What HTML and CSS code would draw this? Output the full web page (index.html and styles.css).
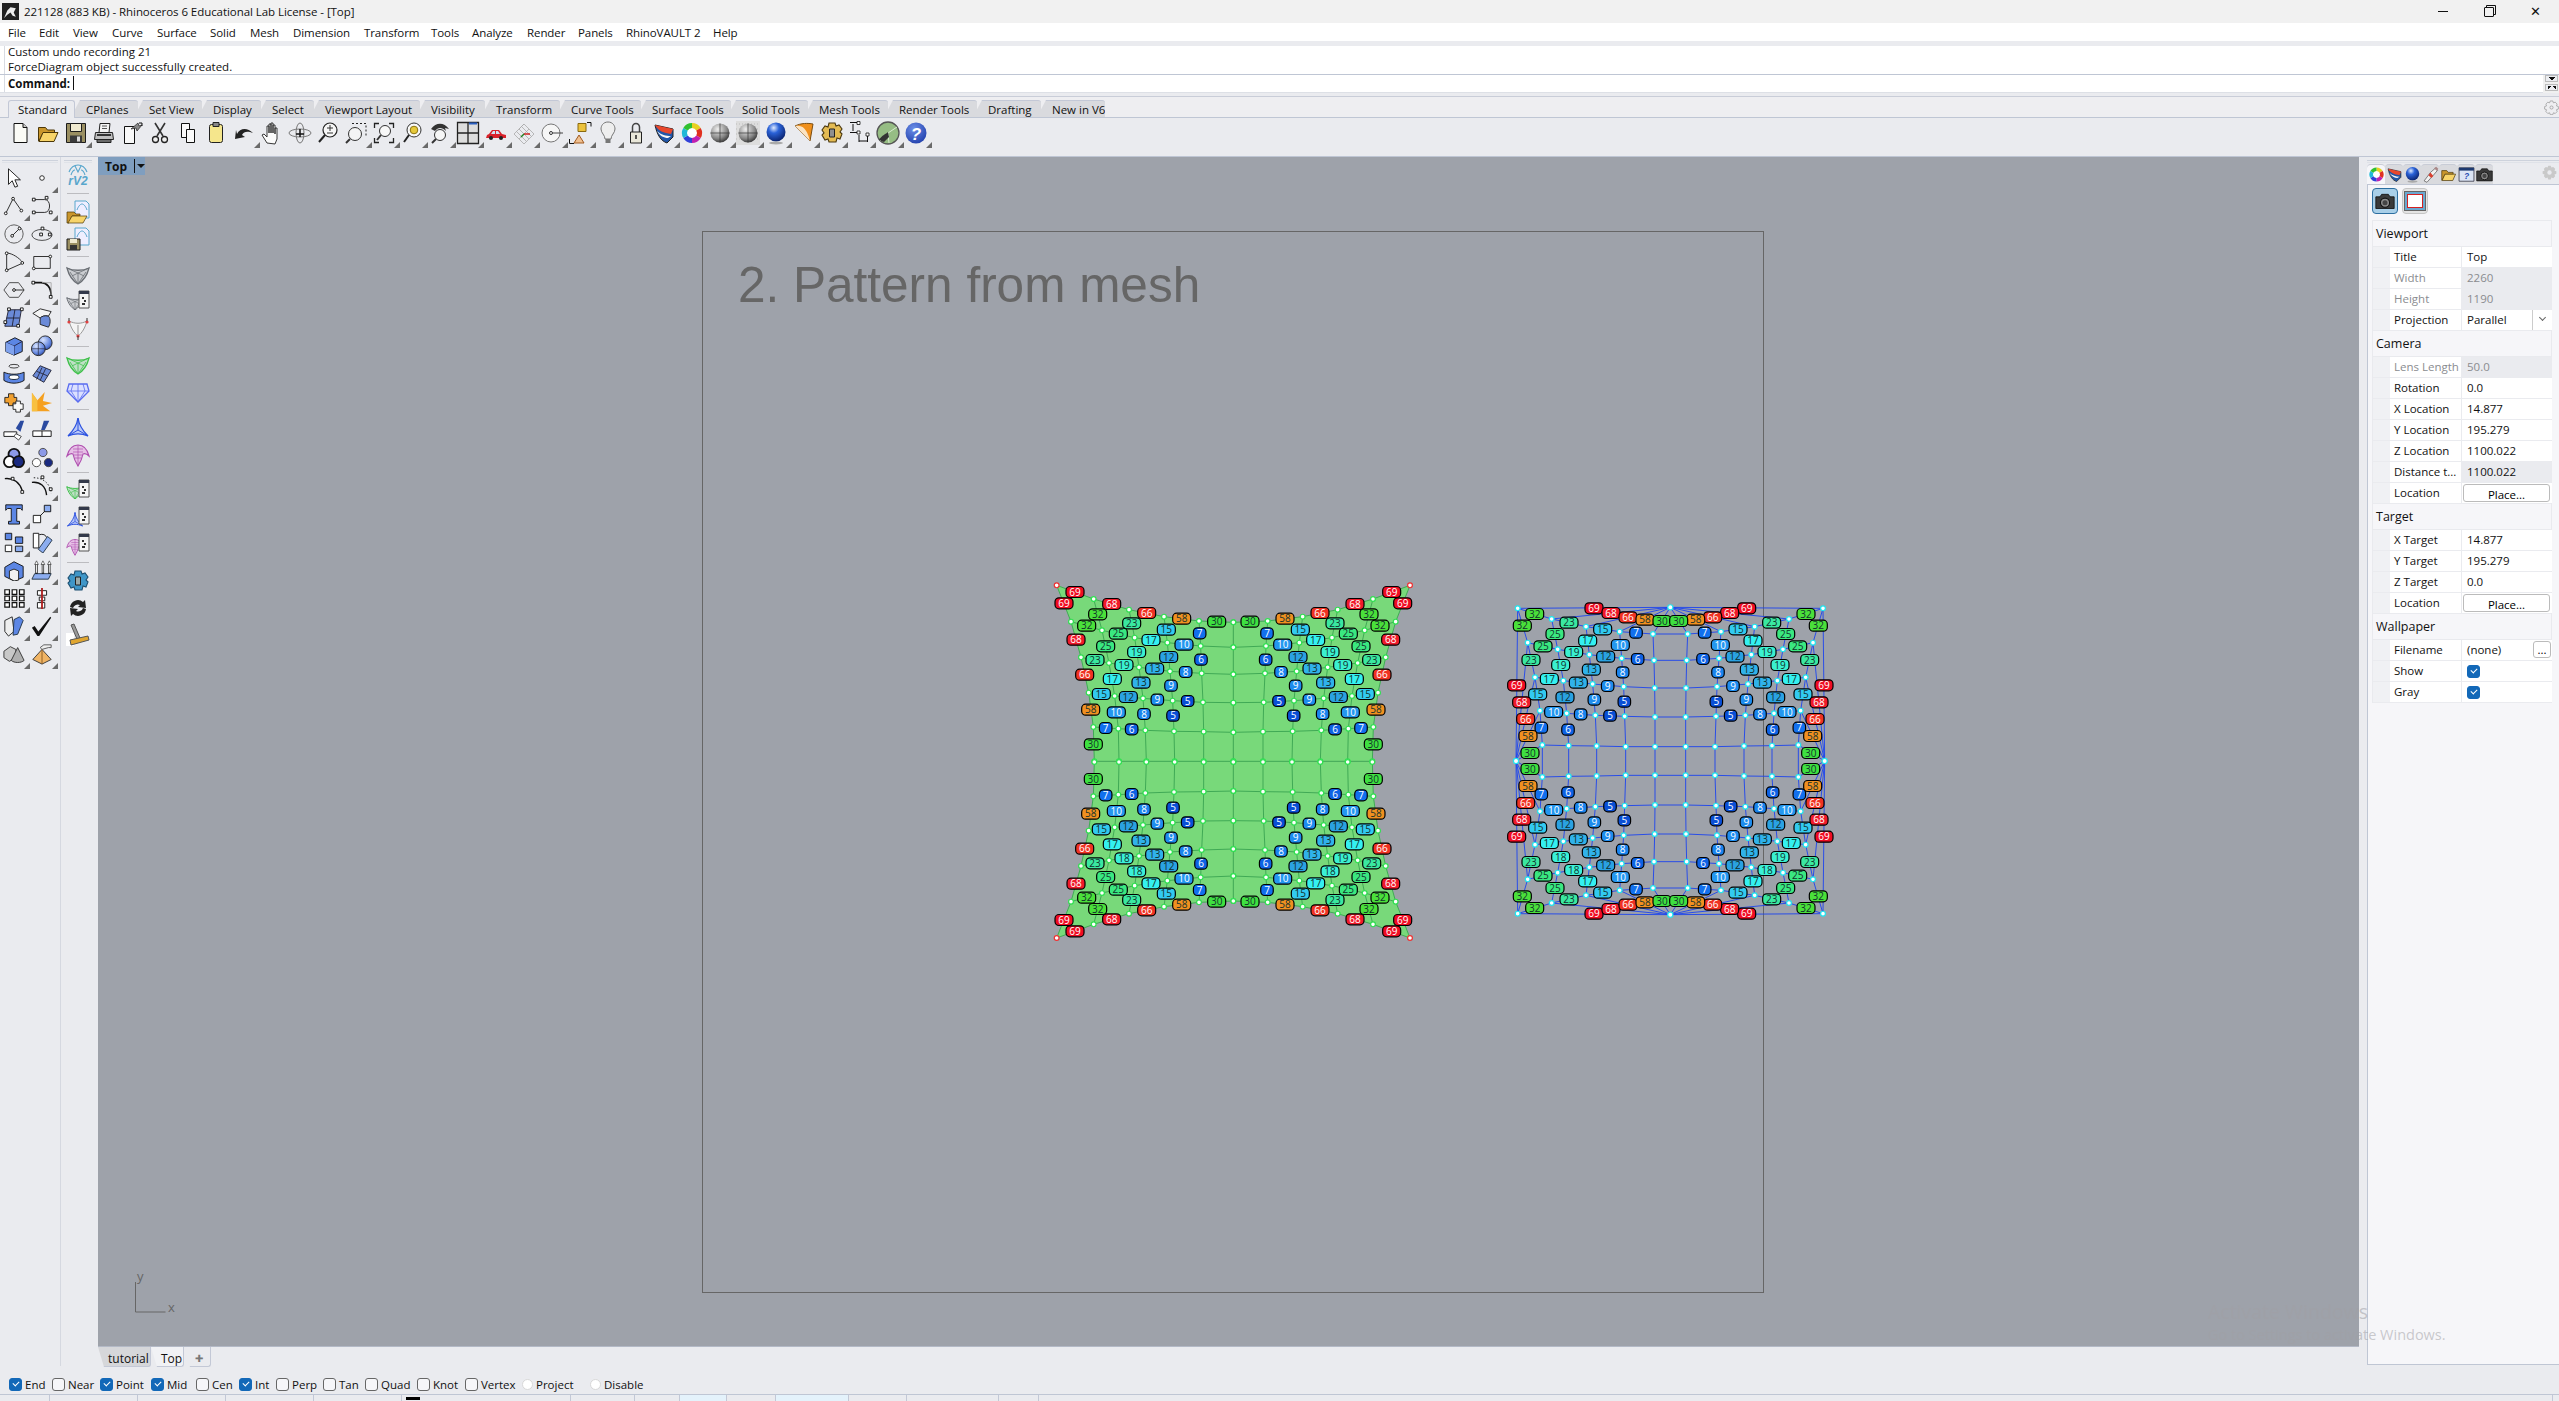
FILE: index.html
```html
<!DOCTYPE html>
<html lang="en">
<head>
    <meta charset="UTF-8">
    <title>221128 (883 KB) - Rhinoceros 6 Educational Lab License - [Top]</title>
    <link rel="stylesheet" href="styles.css">
</head>
<body>

    <!-- shared icon set -->
    <svg class="icon-defs" width="0" height="0">
        <defs>
            <symbol id="i-logo" viewBox="0 0 16 16"><path d="M0 0h16v16H0z" fill="#222"/><path d="M2 14l3-7 3-3 5 1-2 4 2 4-3-1-2-3-3 2z" fill="#eee"/></symbol>
            <symbol id="i-new" viewBox="0 0 24 24"><path d="M6 2.5h9l4 4v15H6z" fill="#fbfbf6" stroke="#111"/><path d="M15 2.5v4h4" fill="#ccc" stroke="#111"/></symbol>
            <symbol id="i-open" viewBox="0 0 24 24"><path d="M2.500 20V6.500h7l2 2.500h7v3H7l-4 8z" fill="#c9962c" stroke="#4c3708"/><path d="M3 20.500l4-9h15l-4 9z" fill="#f7d469" stroke="#4c3708"/></symbol>
            <symbol id="i-save" viewBox="0 0 24 24"><path d="M2.500 2.500h19v19h-19z" fill="#9a8f62" stroke="#1c1c1c"/><path d="M6.500 2.500h11v8h-11z" fill="#efe9cf" stroke="#1c1c1c"/><path d="M6 14.500h12v7H6z" fill="#3b3b3b"/><path d="M13 15.500h3v5h-3z" fill="#ddd"/></symbol>
            <symbol id="i-print" viewBox="0 0 24 24"><path d="M8 2.500h10l-1 9H7z" fill="#f4f4f4" stroke="#222"/><path d="M10 5h5M10 7.500h5" stroke="#555"/><path d="M3.500 11.500h17l1 7h-19z" fill="#bfbfbf" stroke="#222"/><path d="M5 18.500h14v3H5z" fill="#6a6a6a" stroke="#222"/><path d="M5 14h14" stroke="#333" stroke-width="2"/></symbol>
            <symbol id="i-props" viewBox="0 0 24 24"><path d="M4.500 5.500h10v17h-10z" fill="#f8f8f8" stroke="#111"/><path d="M11 8l7-6 1 3 3-1-5 6-1-3z" fill="#888" stroke="#222" stroke-width=".7"/><path d="M19 2h3v3" fill="none" stroke="#111"/></symbol>
            <symbol id="i-cut" viewBox="0 0 24 24"><path d="M7 2l8 13M17 2L9 15" stroke="#333" stroke-width="1.600" fill="none"/><circle cx="7.500" cy="18.500" r="3" fill="#eee" stroke="#222" stroke-width="1.300"/><circle cx="16.500" cy="18.500" r="3" fill="#eee" stroke="#222" stroke-width="1.300"/></symbol>
            <symbol id="i-copy" viewBox="0 0 24 24"><path d="M5.500 2.500h8v14h-8z" fill="#fafafa" stroke="#111"/><path d="M10.500 8.500h8v13h-8z" fill="#fafafa" stroke="#111"/></symbol>
            <symbol id="i-paste" viewBox="0 0 24 24"><rect x="5.500" y="3.500" width="13" height="18" rx="2" fill="#f5e68c" stroke="#222"/><path d="M9 1.500h6v4H9z" fill="#888" stroke="#222"/></symbol>
            <symbol id="i-undo" viewBox="0 0 24 24"><path d="M5 13c3-6 10-7 16-1-5-2-9-2-11 2l3 2-10 2 1-9z" fill="#222"/></symbol>
            <symbol id="i-hand" viewBox="0 0 24 24"><path d="M7 22l-5-8 2-1 3 3V5h2v7-9h2v9-10h2v10-8h2v9-6h2v11l-2 5z" fill="#fbfbfb" stroke="#222" stroke-width=".9"/></symbol>
            <symbol id="i-orbit" viewBox="0 0 24 24"><ellipse cx="12" cy="12" rx="11" ry="4" fill="none" stroke="#777"/><ellipse cx="12" cy="12" rx="4" ry="10" fill="none" stroke="#777"/><path d="M8 13h8M12 8v8" stroke="#111" stroke-width="1.500"/></symbol>
            <symbol id="i-zoom" viewBox="0 0 24 24"><circle cx="14" cy="9" r="7" fill="#f7f7f7" stroke="#222" stroke-width="1.200"/><path d="M9 14l-6 7" stroke="#222" stroke-width="2"/><path d="M11 7h6M14 4v6M11 12h6" stroke="#333"/></symbol>
            <symbol id="i-zwin" viewBox="0 0 24 24"><path d="M8 2.500h14v14" fill="none" stroke="#222" stroke-dasharray="2 2"/><circle cx="11" cy="13" r="6.500" fill="#f4f4f4" stroke="#333"/><path d="M6 18l-4 4" stroke="#333" stroke-width="2"/></symbol>
            <symbol id="i-zext" viewBox="0 0 24 24"><path d="M2.500 7V2.500H7M17 2.500h4.500V7M21.500 17v4.500H17M7 21.500H2.500V17" fill="none" stroke="#222" stroke-width="1.300"/><circle cx="13" cy="10" r="5.500" fill="#f8f8f8" stroke="#333"/><path d="M9 14l-4 5" stroke="#333" stroke-width="2"/></symbol>
            <symbol id="i-zsel" viewBox="0 0 24 24"><circle cx="14" cy="9" r="7" fill="#f8f8f8" stroke="#333"/><circle cx="14" cy="9" r="3.800" fill="#e6c93a" stroke="#8a7210"/><path d="M9 14l-5 7" stroke="#222" stroke-width="2"/></symbol>
            <symbol id="i-zprev" viewBox="0 0 24 24"><circle cx="12" cy="14" r="5.500" fill="#f6f6f6" stroke="#333"/><path d="M8 18l-4 4" stroke="#333" stroke-width="2"/><path d="M3 8c5-7 13-7 18 0l-4-1 1 3c-4-4-8-4-11 0z" fill="#333"/></symbol>
            <symbol id="i-views" viewBox="0 0 24 24"><path d="M1.500 1.500h21v21h-21z" fill="#ddd" stroke="#222" stroke-width="1.300"/><path d="M12 1.500v21M1.500 12h21" stroke="#222" stroke-width="1.300"/><path d="M13 1.500h8v2h-8z" fill="#2a5fc0"/></symbol>
            <symbol id="i-car" viewBox="0 0 24 24"><path d="M3 14l2-1 3-4h7l3 4 4 1v3H2z" fill="#d8222a"/><path d="M9 10h2v3H7zM12 10h2l2 3h-4z" fill="#cfe3f4"/><circle cx="7" cy="17" r="2" fill="#222"/><circle cx="17" cy="17" r="2" fill="#222"/></symbol>
            <symbol id="i-cgrid" viewBox="0 0 24 24"><path d="M2 13l10-10 10 10-10 10zM7 8l10 10M12 3l-5 5M7 18L17 8M4.500 10.500l10 10M9.500 5.500l10 10" fill="none" stroke="#aaa" stroke-width=".8"/><path d="M12 13h6" stroke="#d02020" stroke-width="1.500"/><path d="M12 13l-3 3" stroke="#208020" stroke-width="1.500"/></symbol>
            <symbol id="i-target" viewBox="0 0 24 24"><circle cx="11" cy="12" r="9" fill="#f6f6f6" stroke="#777"/><circle cx="11" cy="12" r="1.500" fill="none" stroke="#333"/><path d="M13 12h10" stroke="#444"/></symbol>
            <symbol id="i-select" viewBox="0 0 24 24"><path d="M10 2.500h8v8h-8z" fill="#ecc23c" stroke="#8a6a10"/><path d="M11 14l5 8H6z" fill="#f0c090" stroke="#a05a20"/><path d="M19 1.500h4v4M1.500 18v4.500H6" fill="none" stroke="#111"/></symbol>
            <symbol id="i-bulb" viewBox="0 0 24 24"><path d="M12 1c-5 0-7 4-7 7 0 4 4 6 4 10h6c0-4 4-6 4-10 0-3-2-7-7-7z" fill="#eee" stroke="#777"/><path d="M9.500 18h5v4h-5z" fill="#777"/></symbol>
            <symbol id="i-lock" viewBox="0 0 24 24"><path d="M8.500 11V6a3.500 3.500 0 017 0v5" fill="none" stroke="#444" stroke-width="1.500"/><path d="M6.500 11h11v11h-11z" fill="#e9e7d9" stroke="#222"/><path d="M12 14v4" stroke="#222" stroke-width="1.500"/></symbol>
            <symbol id="i-shield" viewBox="0 0 24 24"><path d="M3 4l18 4v8l-6 6C9 20 5 14 3 4z" fill="#2056a8" stroke="#222"/><path d="M3 4l18 4-2 5C12 12 6 10 3 4z" fill="#e8472c"/><path d="M5 10c4 4 9 5 14 5l-3 2C12 17 8 15 5 10z" fill="#f4f4f4"/></symbol>
            <symbol id="i-wheel" viewBox="0 0 24 24"><circle cx="12" cy="12" r="8" fill="#fff" stroke="none"/><path d="M12 2a10 10 0 018.700 5l-4.400 2.500A5 5 0 0012 7z" fill="#e8d020"/><path d="M20.700 7a10 10 0 010 10l-4.400-2.500a5 5 0 000-5z" fill="#e03020"/><path d="M20.700 17A10 10 0 0112 22v-5a5 5 0 004.300-2.500z" fill="#c020b0"/><path d="M12 22a10 10 0 01-8.700-5l4.400-2.500A5 5 0 0012 17z" fill="#3040d8"/><path d="M3.300 17a10 10 0 010-10l4.400 2.500a5 5 0 000 5z" fill="#20b8d8"/><path d="M3.300 7A10 10 0 0112 2v5a5 5 0 00-4.300 2.500z" fill="#30c030"/></symbol>
            <symbol id="i-ball" viewBox="0 0 24 24"><defs><radialGradient id="g-ball" cx=".38" cy=".3" r=".8"><stop offset="0" stop-color="#eee"/><stop offset=".6" stop-color="#888"/><stop offset="1" stop-color="#222"/></radialGradient></defs><circle cx="12" cy="12" r="9.500" fill="url(#g-ball)"/><path d="M2.500 12h19M12 2.500v19" stroke="#333" stroke-width=".7"/></symbol>
            <symbol id="i-ball-dot" viewBox="0 0 24 24"><path d="M0 0h24v24H0z" fill="#ddd"/><path d="M0 3h24M0 8h24M0 13h24M0 18h24" stroke="#bbb" stroke-dasharray="1 2"/><use href="#i-ball" width="24" height="24"/></symbol>
            <symbol id="i-blueball" viewBox="0 0 24 24"><defs><radialGradient id="g-blue" cx=".38" cy=".28" r=".8"><stop offset="0" stop-color="#dfeaff"/><stop offset=".35" stop-color="#2a62d8"/><stop offset="1" stop-color="#061a60"/></radialGradient></defs><circle cx="12" cy="11" r="9.500" fill="url(#g-blue)"/><ellipse cx="12" cy="22" rx="7" ry="1.500" fill="#aaa"/></symbol>
            <symbol id="i-cone" viewBox="0 0 24 24"><path d="M3 5c6-3 13-3 18-2l-3 17z" fill="#f0901c" stroke="#7a4c10"/><path d="M3 5c6-1 11 0 15 15z" fill="#fbe3c2"/></symbol>
            <symbol id="i-gear" viewBox="0 0 24 24"><path d="M9 2h6l1 3 3-1 3 4-2 3 2 2-2 5-3-1-1 4H9l-1-3-3 1-3-5 2-2-2-3 3-4 3 1z" fill="#e4bb52" stroke="#4a3810" stroke-width="1.100"/><path d="M9.500 8h5v8h-5z" fill="#8f8f8f" stroke="#222"/></symbol>
            <symbol id="i-dims" viewBox="0 0 24 24"><path d="M2 1.500h7M5 3v7M2 11.500h8" stroke="#111" fill="none"/><path d="M9 .5h3v3H9zM9 10h3v3H9zM18 12h3v3h-3z" fill="#fff" stroke="#111" stroke-width=".8"/><path d="M11 14v7M19.500 15v6M11 20h8" stroke="#111"/></symbol>
            <symbol id="i-globe" viewBox="0 0 24 24"><circle cx="12" cy="12" r="11" fill="#96bd84" stroke="#555" stroke-width="1.300"/><path d="M12 12l9-6M12 12l1 10M12 12L4 20" stroke="#d9ecd0"/><path d="M3 19c3-5 7-6 9-8l1 5-5 5z" fill="#333"/></symbol>
            <symbol id="i-help" viewBox="0 0 24 24"><defs><radialGradient id="g-help" cx=".4" cy=".3" r=".8"><stop offset="0" stop-color="#6c8fe8"/><stop offset="1" stop-color="#1c3aa8"/></radialGradient></defs><circle cx="12" cy="12" r="10.500" fill="url(#g-help)"/><text x="12" y="18.500" text-anchor="middle" font-family="Liberation Sans" font-weight="700" font-size="17" fill="#fff">?</text></symbol>

            <symbol id="i-arrow" viewBox="0 0 24 24"><path d="M6 2v17l4-4 3 7 3-1-3-7h6z" fill="#fff" stroke="#111"/></symbol>
            <symbol id="i-point" viewBox="0 0 24 24"><circle cx="12" cy="12" r="2.500" fill="#fff" stroke="#222"/></symbol>
            <symbol id="i-poly" viewBox="0 0 24 24"><path d="M3 20L11 4l9 13" fill="none" stroke="#222"/><g fill="#fff" stroke="#111"><circle cx="3" cy="20" r="1.500"/><circle cx="11" cy="4" r="1.500"/><circle cx="20" cy="17" r="1.500"/></g></symbol>
            <symbol id="i-curve" viewBox="0 0 24 24"><path d="M3 5h12c7 0 7 14 0 14H3" fill="none" stroke="#222"/><g fill="#fff" stroke="#111"><path d="M1.500 3.500h3v3h-3zM15.500 1.500h3v3h-3zM20 17.500h3v3h-3zM1.500 17.500h3v3h-3z"/></g></symbol>
            <symbol id="i-circle" viewBox="0 0 24 24"><circle cx="12" cy="12" r="10" fill="none" stroke="#555"/><path d="M10 14l8-8" stroke="#222"/><circle cx="10" cy="14" r="1.500" fill="#fff" stroke="#111"/><circle cx="18" cy="6" r="1.500" fill="#fff" stroke="#111"/></symbol>
            <symbol id="i-ellipse" viewBox="0 0 24 24"><ellipse cx="12" cy="13" rx="11" ry="6" fill="none" stroke="#444"/><path d="M9.500 11h3v3h-3zM11 4.500h3v3h-3zM19 11h3v3h-3z" fill="#fff" stroke="#111"/></symbol>
            <symbol id="i-arc" viewBox="0 0 24 24"><path d="M4 2v19l18-8C17 7 11 3 4 2z" fill="none" stroke="#222"/><g fill="#fff" stroke="#111"><circle cx="4" cy="2.500" r="1.500"/><circle cx="4" cy="21" r="1.500"/><circle cx="21" cy="13" r="1.500"/></g></symbol>
            <symbol id="i-rect" viewBox="0 0 24 24"><path d="M3 6h18v13H3z" fill="none" stroke="#222"/><circle cx="3" cy="19" r="1.500" fill="#fff" stroke="#111"/><circle cx="21" cy="6" r="1.500" fill="#fff" stroke="#111"/></symbol>
            <symbol id="i-hex" viewBox="0 0 24 24"><path d="M7 4h10l6 8-6 8H7l-6-8z" fill="none" stroke="#444"/><path d="M12 12h11" stroke="#222"/><circle cx="12" cy="12" r="1.500" fill="#fff" stroke="#111"/></symbol>
            <symbol id="i-fillet" viewBox="0 0 24 24"><path d="M3 4h8c6 0 11 5 11 14" fill="none" stroke="#111" stroke-width="2"/><path d="M12 4h10v14" fill="none" stroke="#aaa"/><path d="M1 2.500h3v3H1zM20 18h3v3h-3z" fill="#fff" stroke="#111"/></symbol>
            <symbol id="i-patch" viewBox="0 0 24 24"><path d="M6 3h14l-3 18H2z" fill="#6a8ad8" stroke="#223"/><path d="M13 3l-3 18M4 12h14" stroke="#223"/><g fill="#fff" stroke="#111"><path d="M5 1h3v3H5zM19 1h3v3h-3zM15 19h3v3h-3zM1 15h3v3H1z"/></g></symbol>
            <symbol id="i-bent" viewBox="0 0 24 24"><path d="M2 7l8-5 12 3-3 5c-4-1-7 0-9 2z" fill="#f4f4f4" stroke="#222"/><path d="M19 10c3 3 2 9 0 12l-9-3V12c2-2 5-3 9-2z" fill="#6a8ad8" stroke="#222"/></symbol>
            <symbol id="i-cube" viewBox="0 0 24 24"><path d="M3 8l10-5 8 4v11l-9 4-9-4z" fill="#5c86e4" stroke="#111"/><path d="M3 8l9 4 9-5M12 12v10" fill="none" stroke="#224"/><path d="M3 8l9 4v10l-9-4z" fill="#7fa2ee"/></symbol>
            <symbol id="i-spheres" viewBox="0 0 24 24"><defs><radialGradient id="g-sph" cx=".35" cy=".3" r=".8"><stop offset="0" stop-color="#d8e4ff"/><stop offset=".7" stop-color="#5c80dc"/><stop offset="1" stop-color="#2a3e90"/></radialGradient></defs><circle cx="15.500" cy="8.500" r="7.500" fill="url(#g-sph)" stroke="#222"/><circle cx="8" cy="15" r="7.500" fill="url(#g-sph)" stroke="#222"/><path d="M.5 15h15M8 8v14" stroke="#223" stroke-width=".7"/></symbol>
            <symbol id="i-tube" viewBox="0 0 24 24"><ellipse cx="12" cy="3.500" rx="5.500" ry="2" fill="none" stroke="#333"/><path d="M1 10c6 3 16 3 22 0v9c-6 4-16 4-22 0z" fill="#5c86e4" stroke="#111"/><ellipse cx="12" cy="15.500" rx="5.500" ry="2.500" fill="#fff" stroke="#123"/></symbol>
            <symbol id="i-meshbent" viewBox="0 0 24 24"><path d="M2 14l8-11 12 5-8 13z" fill="#6a8ad8" stroke="#223"/><path d="M6 9l12 5M12 5l-6 13M16 6l-6 13" stroke="#223" stroke-width=".9"/></symbol>
            <symbol id="i-union" viewBox="0 0 24 24"><path d="M2 7h4V3h6v4h3v6h-4v3H6v-3H2z" fill="#f0a030" stroke="#222"/><path d="M11 14h3v-3h5v3h3v6h-3v3h-5v-3h-3z" fill="#fafafa" stroke="#222"/></symbol>
            <symbol id="i-burst" viewBox="0 0 24 24"><path d="M1 2l6 8 8-9-2 10 10 2-10 3 8 6H1z" fill="#f5a020"/><path d="M1 2l6 8v12H1z" fill="#f8c040"/></symbol>
            <symbol id="i-trim" viewBox="0 0 24 24"><path d="M1 14h14v5H1z" fill="#fff" stroke="#111"/><path d="M14 10l5-8h4l-4 12z" fill="#2a4aa0"/><path d="M14 16l6 3-3 4-5-4z" fill="#fff" stroke="#444"/></symbol>
            <symbol id="i-split" viewBox="0 0 24 24"><path d="M2 13h20v6H2z" fill="#fff" stroke="#111"/><path d="M11 12l3-10h6l-5 10z" fill="#2a4aa0"/><path d="M12 13v6" stroke="#111"/></symbol>
            <symbol id="i-circles" viewBox="0 0 24 24"><circle cx="12" cy="8" r="6" fill="#8c9ae8" stroke="#111" stroke-width="2"/><circle cx="7" cy="16" r="6" fill="#fff" stroke="#111" stroke-width="2"/><circle cx="17" cy="16" r="6" fill="#1a2a80" stroke="#111" stroke-width="2"/></symbol>
            <symbol id="i-circles2" viewBox="0 0 24 24"><circle cx="13" cy="6" r="4.500" fill="#8c9ae8" stroke="#444"/><circle cx="6" cy="17" r="4.500" fill="#fff" stroke="#444"/><circle cx="19" cy="17" r="4.500" fill="#1a2a80" stroke="#444"/></symbol>
            <symbol id="i-cpts" viewBox="0 0 24 24"><path d="M2 4c9-1 16 4 19 13" fill="none" stroke="#111" stroke-width="1.500"/><path d="M9 2.500h3v3H9zM19.500 17h3v3h-3z" fill="#fff" stroke="#111"/></symbol>
            <symbol id="i-offset" viewBox="0 0 24 24"><path d="M1 8c9-1 15 4 16 14" fill="none" stroke="#111" stroke-width="1.500"/><path d="M3 3c11 0 18 7 19 17" fill="none" stroke="#111" stroke-dasharray="1.500 2"/><path d="M11 1h3v3h-3zM20 14h3v3h-3z" fill="#fff" stroke="#111"/></symbol>
            <symbol id="i-text" viewBox="0 0 24 24"><path d="M3 2h18v6l-2-2h-4v14h3v3H6v-3h3V6H5L3 8z" fill="#5c86e4" stroke="#111"/></symbol>
            <symbol id="i-scale" viewBox="0 0 24 24"><path d="M2.500 13.500h8v8h-8z" fill="#fff" stroke="#111"/><path d="M14.500 2.500h7v7h-7z" fill="#8cadf0" stroke="#111"/><path d="M10 14l5-5" stroke="#111"/></symbol>
            <symbol id="i-group" viewBox="0 0 24 24"><g stroke="#111"><path d="M2.500 2.500h7v7h-7z" fill="#5c86e4"/><path d="M13.500 6.500h8v7h-8z" fill="#5c86e4"/><path d="M2.500 15.500h7v7h-7z" fill="#fff"/><path d="M13.500 16.500h8v6h-8z" fill="#8cadf0"/></g></symbol>
            <symbol id="i-rotate" viewBox="0 0 24 24"><path d="M2.500 2.500h6v16h-6z" fill="#fff" stroke="#111"/><path d="M18 6l5 4-10 14-5-4z" fill="#8cadf0" stroke="#234"/><path d="M9 4c4-1 7 0 8 3" fill="none" stroke="#111"/></symbol>
            <symbol id="i-solid" viewBox="0 0 24 24"><path d="M2 9l10-6 10 5v12l-10 4-10-5z" fill="#5c86e4" stroke="#111"/><path d="M7 13l5-2 5 2v10l-5 1-5-3z" fill="#f2f2f2" stroke="#222"/></symbol>
            <symbol id="i-extrude" viewBox="0 0 24 24"><path d="M4 16h18l-3 6H1z" fill="#8cadf0" stroke="#234"/><path d="M6 16V5M13 16V5M20 16V5" stroke="#111" stroke-width="2.500"/><path d="M6 15V5M13 15V5M20 15V5" stroke="#fff"/><path d="M6 2l-2 4h4zM13 2l-2 4h4zM20 2l-2 4h4z" fill="#fff" stroke="#111" stroke-width=".6"/></symbol>
            <symbol id="i-array" viewBox="0 0 24 24"><path d="M2 3h5v5H2zM10 3h5v5h-5zM18 3h5v5h-5zM2 10h5v5H2zM10 10h5v5h-5zM18 10h5v5h-5zM2 17h5v5H2zM10 17h5v5h-5zM18 17h5v5h-5z" fill="#fff" stroke="#111" stroke-width="1.300"/></symbol>
            <symbol id="i-mirror" viewBox="0 0 24 24"><path d="M7 4h10v5H7zM9 11h6v4H9zM7 17h8v6H7z" fill="#fff" stroke="#111"/><path d="M12 1v23" stroke="#b02020" stroke-width="2"/></symbol>
            <symbol id="i-analysis" viewBox="0 0 24 24"><path d="M2 6l8-4 2 16-6 5-4-5z" fill="#eee" stroke="#222"/><path d="M12 5l6-3 4 4-6 15-5 1z" fill="#5c86e4" stroke="#234"/></symbol>
            <symbol id="i-check" viewBox="0 0 24 24"><path d="M1 14l3-2 4 6L21 2l1 1L9 23H7z" fill="#111"/></symbol>
            <symbol id="i-solids" viewBox="0 0 24 24"><path d="M1 9l7-5 6 3v9l-7 4-6-4z" fill="#c8c8c8" stroke="#333"/><path d="M16 5l7 14c-3 3-11 3-14 0z" fill="#b0b0b0" stroke="#333"/></symbol>
            <symbol id="i-pyramid" viewBox="0 0 24 24"><path d="M12 7L2 18l10 5 10-5z" fill="#f0b464" stroke="#333"/><path d="M12 7v16" stroke="#8a5a20"/><path d="M10 5l4-3h8v3h-3l-7 2z" fill="#eee" stroke="#555"/></symbol>

            <symbol id="i-rv2" viewBox="0 0 24 24"><path d="M3 8c2-5 5-7 9-7s7 2 9 7M5 11c1-3 2-5 4-5M19 11c-1-3-2-5-4-5M9 2l3 6 3-6" fill="none" stroke="#58a6cc" stroke-width="1.100"/><text x="12" y="21" text-anchor="middle" font-family="Liberation Sans" font-weight="700" font-size="12" fill="#58a6cc">rV2</text></symbol>
            <symbol id="i-rvopen" viewBox="0 0 24 24"><path d="M9 1h11l3 3v14H9z" fill="#eef" stroke="#58a6cc"/><path d="M11 10c1-3 3-6 5-6s4 3 5 6" fill="none" stroke="#58a6cc"/><path d="M1 23V12h7l2 2h4v2H6l-3 7z" fill="#c9962c" stroke="#4c3708" stroke-width=".7"/><path d="M2 23l4-7h15l-4 7z" fill="#f7d469" stroke="#4c3708" stroke-width=".7"/></symbol>
            <symbol id="i-rvsave" viewBox="0 0 24 24"><path d="M9 1h11l3 3v14H9z" fill="#eef" stroke="#58a6cc"/><path d="M11 10c1-3 3-6 5-6s4 3 5 6" fill="none" stroke="#58a6cc"/><path d="M1 12h13v11H1z" fill="#9a8f62" stroke="#1c1c1c"/><path d="M4 12h7v4H4z" fill="#efe9cf"/><path d="M4 18h7v5H4z" fill="#333"/></symbol>
            <symbol id="i-net" viewBox="0 0 24 24"><path d="M1 5c6 3 16 3 22 0-2 8-6 13-11 16C7 18 3 13 1 5z" fill="currentColor" fill-opacity=".25" stroke="currentColor" stroke-width="1.300"/><path d="M12 21V10M1 5l11 5 11-5M6 13l6-3 6 3M4 9l8 12 8-12" fill="none" stroke="currentColor" stroke-width=".8"/></symbol>
            <symbol id="i-netdoc" viewBox="0 0 24 24"><use href="#i-net" width="18" height="18" y="4"/><path d="M13 1h10v17H13z" fill="#f4f4f4" stroke="#555"/><path d="M13 1h10v3H13z" fill="#33394a"/><path d="M16 7h2v2h-2zM18 10h2v2h-2zM16 13h3v2h-3z" fill="#333"/></symbol>
            <symbol id="i-netpts" viewBox="0 0 24 24"><path d="M3 4c6 3 12 3 18 0-2 7-5 12-9 15C8 16 5 11 3 4z" fill="#f4f4f4" stroke="#999"/><path d="M12 19V8" stroke="#999"/><g fill="#e04040"><circle cx="3" cy="5" r="1.600"/><circle cx="21" cy="5" r="1.600"/><circle cx="12" cy="19" r="1.600"/></g><path d="M3 1v3M21 1v3M12 19v4" stroke="#333"/></symbol>
            <symbol id="i-gem" viewBox="0 0 24 24"><path d="M3 4h18l2 7-11 11L1 11z" fill="#dbe0ff" stroke="#5a6cf0" stroke-width="1.300"/><path d="M1 11h22M7 4l-2 7 7 11 7-11-2-7M12 4v18" fill="none" stroke="#5a6cf0" stroke-width=".8"/></symbol>
            <symbol id="i-star" viewBox="0 0 24 24"><path d="M12 2c1 7 4 12 10 18-7-3-13-3-20 0C8 14 11 9 12 2z" fill="#b9c8f8" stroke="#2c52e0" stroke-width="1.300"/><path d="M12 2v12M2 20l10-6 10 6" fill="none" stroke="#2c52e0"/></symbol>
            <symbol id="i-elephant" viewBox="0 0 24 24"><path d="M12 2c5 0 9 3 11 11-2-2-4-3-6-2-1 5-3 9-5 12-2-3-4-7-5-12-2-1-4 0-6 2C3 5 7 2 12 2z" fill="#e6c0e6" stroke="#b050b0" stroke-width="1.200"/><path d="M7 6h10M7 9h10M8 12h8M9 15h6M12 2v21" stroke="#b050b0" stroke-width=".7"/></symbol>
            <symbol id="i-stardoc" viewBox="0 0 24 24"><use href="#i-star" width="18" height="18" y="5"/><path d="M13 1h10v17H13z" fill="#f4f4f4" stroke="#555"/><path d="M13 1h10v3H13z" fill="#33394a"/><path d="M16 7h2v2h-2zM18 10h2v2h-2zM16 13h3v2h-3z" fill="#333"/></symbol>
            <symbol id="i-eledoc" viewBox="0 0 24 24"><use href="#i-elephant" width="18" height="20" y="4"/><path d="M13 1h10v17H13z" fill="#f4f4f4" stroke="#555"/><path d="M13 1h10v3H13z" fill="#33394a"/><path d="M16 7h2v2h-2zM18 10h2v2h-2zM16 13h3v2h-3z" fill="#333"/></symbol>
            <symbol id="i-rvgear" viewBox="0 0 24 24"><path d="M9 2h6l1 3 3-1 3 4-2 3 2 2-2 5-3-1-1 4H9l-1-3-3 1-3-5 2-2-2-3 3-4 3 1z" fill="#3f96c8" stroke="#1c4e70" stroke-width="1.100"/><path d="M9.500 8h5v8h-5z" fill="#9aa" stroke="#222"/></symbol>
            <symbol id="i-sync" viewBox="0 0 24 24"><path d="M4 11a8 8 0 0113-5l2-2 1 8-8-1 2-2a5 5 0 00-7 3zM20 13a8 8 0 01-13 5l-2 2-1-8 8 1-2 2a5 5 0 007-3z" fill="#222"/></symbol>
            <symbol id="i-broom" viewBox="0 0 24 24"><path d="M0 10h8v13H0z" fill="#fff"/><path d="M5 2l3-1 6 14-3 1z" fill="#999" stroke="#555"/><path d="M4 17l18-4 1 4-18 5z" fill="#e0a630" stroke="#555"/></symbol>

            <symbol id="i-paint" viewBox="0 0 24 24"><path d="M3 21l9-12 7-6 3 3-6 7-9 10z" fill="#f2f2f2" stroke="#555"/><path d="M12 9l4 5-3 3-4-4z" fill="#d84030"/><path d="M17 3l4 4 2-3-3-3z" fill="#a88"/></symbol>
            <symbol id="i-helpwin" viewBox="0 0 24 24"><path d="M1.500 2.500h21v19h-21z" fill="#dbe4f4" stroke="#223"/><path d="M1.500 2.500h21v4h-21z" fill="#1e3a70"/><text x="12" y="19" text-anchor="middle" font-family="Liberation Sans" font-weight="700" font-size="12" fill="#2548b0">?</text></symbol>
            <symbol id="i-camera" viewBox="0 0 24 24"><path d="M1 7h5l2-3h8l2 3h5v14H1z" fill="#3a3a3a" stroke="#111"/><circle cx="12" cy="14" r="5.500" fill="#8a8a8a" stroke="#111" stroke-width="1.300"/><circle cx="12" cy="14" r="3" fill="#444"/></symbol>
            <symbol id="i-cog" viewBox="0 0 24 24"><path d="M10 1h4l1 3 3-1 3 3-1 3 3 1v4l-3 1 1 3-3 3-3-1-1 3h-4l-1-3-3 1-3-3 1-3-3-1v-4l3-1-1-3 3-3 3 1z" fill="currentColor"/><circle cx="12" cy="12" r="3.500" fill="#eaebef"/></symbol>
            <symbol id="i-cog-line" viewBox="0 0 24 24"><path d="M10 1.500h4l1 3 3-1 3 3-1 3 3 1v4l-3 1 1 3-3 3-3-1-1 3h-4l-1-3-3 1-3-3 1-3-3-1v-4l3-1-1-3 3-3 3 1z" fill="none" stroke="#8a8a8a"/><circle cx="12" cy="12" r="2.500" fill="none" stroke="#8a8a8a"/></symbol>
        </defs>
    </svg>

    <header class="titlebar">
        <svg class="title-logo"><use href="#i-logo"/></svg>
        <span class="title-text">221128 (883 KB) - Rhinoceros 6 Educational Lab License - [Top]</span>
        <div class="win-buttons">
            <span class="win-min"></span>
            <span class="win-max"></span>
            <span class="win-close">✕</span>
        </div>
    </header>

    <nav class="menubar">
        <span>File</span><span>Edit</span><span>View</span><span>Curve</span><span>Surface</span><span>Solid</span><span>Mesh</span><span>Dimension</span><span>Transform</span><span>Tools</span><span>Analyze</span><span>Render</span><span>Panels</span><span>RhinoVAULT 2</span><span>Help</span>
    </nav>

    <section class="command">
        <div class="cmd-history">
            <div>Custom undo recording 21</div>
            <div>ForceDiagram object successfully created.</div>
        </div>
        <div class="cmd-line">
            <b>Command:</b><span class="caret"></span>
            <div class="cmd-spin"><i class="spin-up"></i><i class="spin-down"></i></div>
        </div>
    </section>

    <div class="tabstrip">
        <span class="tab active">Standard</span>
        <span class="tab">CPlanes</span>
        <span class="tab">Set View</span>
        <span class="tab">Display</span>
        <span class="tab">Select</span>
        <span class="tab">Viewport Layout</span>
        <span class="tab">Visibility</span>
        <span class="tab">Transform</span>
        <span class="tab">Curve Tools</span>
        <span class="tab">Surface Tools</span>
        <span class="tab">Solid Tools</span>
        <span class="tab">Mesh Tools</span>
        <span class="tab">Render Tools</span>
        <span class="tab">Drafting</span>
        <span class="tab">New in V6</span>
        <svg class="strip-gear"><use href="#i-cog-line"/></svg>
    </div>

    <div class="toolbar">
        <i class="tb"><svg><use href="#i-new"/></svg></i>
        <i class="tb"><svg><use href="#i-open"/></svg></i>
        <i class="tb fly"><svg><use href="#i-save"/></svg></i>
        <i class="tb"><svg><use href="#i-print"/></svg></i>
        <i class="tb"><svg><use href="#i-props"/></svg></i>
        <i class="tb"><svg><use href="#i-cut"/></svg></i>
        <i class="tb"><svg><use href="#i-copy"/></svg></i>
        <i class="tb"><svg><use href="#i-paste"/></svg></i>
        <i class="tb fly"><svg><use href="#i-undo"/></svg></i>
        <i class="tb"><svg><use href="#i-hand"/></svg></i>
        <i class="tb"><svg><use href="#i-orbit"/></svg></i>
        <i class="tb"><svg><use href="#i-zoom"/></svg></i>
        <i class="tb fly"><svg><use href="#i-zwin"/></svg></i>
        <i class="tb fly"><svg><use href="#i-zext"/></svg></i>
        <i class="tb fly"><svg><use href="#i-zsel"/></svg></i>
        <i class="tb fly"><svg><use href="#i-zprev"/></svg></i>
        <i class="tb fly"><svg><use href="#i-views"/></svg></i>
        <i class="tb fly"><svg><use href="#i-car"/></svg></i>
        <i class="tb fly"><svg><use href="#i-cgrid"/></svg></i>
        <i class="tb fly"><svg><use href="#i-target"/></svg></i>
        <i class="tb fly"><svg><use href="#i-select"/></svg></i>
        <i class="tb fly"><svg><use href="#i-bulb"/></svg></i>
        <i class="tb fly"><svg><use href="#i-lock"/></svg></i>
        <i class="tb fly"><svg><use href="#i-shield"/></svg></i>
        <i class="tb fly"><svg><use href="#i-wheel"/></svg></i>
        <i class="tb fly"><svg><use href="#i-ball"/></svg></i>
        <i class="tb fly"><svg><use href="#i-ball-dot"/></svg></i>
        <i class="tb fly"><svg><use href="#i-blueball"/></svg></i>
        <i class="tb fly"><svg><use href="#i-cone"/></svg></i>
        <i class="tb fly"><svg><use href="#i-gear"/></svg></i>
        <i class="tb fly"><svg><use href="#i-dims"/></svg></i>
        <i class="tb fly"><svg><use href="#i-globe"/></svg></i>
        <i class="tb fly"><svg><use href="#i-help"/></svg></i>
    </div>

    <main class="workarea">
        <aside class="lefttools">
            <div class="tool-main">
                <div class="grip"></div>
                <div class="tool-grid">
                    <i class="tb"><svg><use href="#i-arrow"/></svg></i><i class="tb fly"><svg><use href="#i-point"/></svg></i>
                    <i class="tb fly"><svg><use href="#i-poly"/></svg></i><i class="tb fly"><svg><use href="#i-curve"/></svg></i>
                    <i class="tb fly"><svg><use href="#i-circle"/></svg></i><i class="tb fly"><svg><use href="#i-ellipse"/></svg></i>
                    <i class="tb fly"><svg><use href="#i-arc"/></svg></i><i class="tb fly"><svg><use href="#i-rect"/></svg></i>
                    <i class="tb fly"><svg><use href="#i-hex"/></svg></i><i class="tb fly"><svg><use href="#i-fillet"/></svg></i>
                    <i class="tb fly"><svg><use href="#i-patch"/></svg></i><i class="tb fly"><svg><use href="#i-bent"/></svg></i>
                    <i class="tb fly"><svg><use href="#i-cube"/></svg></i><i class="tb fly"><svg><use href="#i-spheres"/></svg></i>
                    <i class="tb fly"><svg><use href="#i-tube"/></svg></i><i class="tb fly"><svg><use href="#i-meshbent"/></svg></i>
                    <i class="tb fly"><svg><use href="#i-union"/></svg></i><i class="tb"><svg><use href="#i-burst"/></svg></i>
                    <i class="tb fly"><svg><use href="#i-trim"/></svg></i><i class="tb"><svg><use href="#i-split"/></svg></i>
                    <i class="tb fly"><svg><use href="#i-circles"/></svg></i><i class="tb fly"><svg><use href="#i-circles2"/></svg></i>
                    <i class="tb"><svg><use href="#i-cpts"/></svg></i><i class="tb fly"><svg><use href="#i-offset"/></svg></i>
                    <i class="tb fly"><svg><use href="#i-text"/></svg></i><i class="tb fly"><svg><use href="#i-scale"/></svg></i>
                    <i class="tb fly"><svg><use href="#i-group"/></svg></i><i class="tb fly"><svg><use href="#i-rotate"/></svg></i>
                    <i class="tb fly"><svg><use href="#i-solid"/></svg></i><i class="tb fly"><svg><use href="#i-extrude"/></svg></i>
                    <i class="tb fly"><svg><use href="#i-array"/></svg></i><i class="tb fly"><svg><use href="#i-mirror"/></svg></i>
                    <i class="tb fly"><svg><use href="#i-analysis"/></svg></i><i class="tb fly"><svg><use href="#i-check"/></svg></i>
                    <i class="tb fly"><svg><use href="#i-solids"/></svg></i><i class="tb fly"><svg><use href="#i-pyramid"/></svg></i>
                </div>
            </div>
            <div class="tool-rv">
                <div class="grip"></div>
                <i class="rv"><svg><use href="#i-rv2"/></svg></i>
                <hr>
                <i class="rv"><svg><use href="#i-rvopen"/></svg></i>
                <i class="rv"><svg><use href="#i-rvsave"/></svg></i>
                <hr>
                <i class="rv net-grey"><svg><use href="#i-net"/></svg></i>
                <i class="rv net-grey"><svg><use href="#i-netdoc"/></svg></i>
                <i class="rv"><svg><use href="#i-netpts"/></svg></i>
                <hr>
                <i class="rv net-green"><svg><use href="#i-net"/></svg></i>
                <i class="rv"><svg><use href="#i-gem"/></svg></i>
                <hr>
                <i class="rv"><svg><use href="#i-star"/></svg></i>
                <i class="rv"><svg><use href="#i-elephant"/></svg></i>
                <hr>
                <i class="rv net-green"><svg><use href="#i-netdoc"/></svg></i>
                <i class="rv"><svg><use href="#i-stardoc"/></svg></i>
                <i class="rv"><svg><use href="#i-eledoc"/></svg></i>
                <hr>
                <i class="rv"><svg><use href="#i-rvgear"/></svg></i>
                <i class="rv"><svg><use href="#i-sync"/></svg></i>
                <i class="rv"><svg><use href="#i-broom"/></svg></i>
            </div>
        </aside>

        <div class="center">
            <div class="viewport">
                <svg id="canvas" class="canvas" viewBox="98 157 2260 1190">
                    <rect class="page-frame" x="702.500" y="231.500" width="1061" height="1061"/>
                    <text class="page-title" x="738" y="302">2. Pattern from mesh</text>
                    <path class="axes" d="M135.500 1282v30h30"/>
                    <text class="axis-label" x="137" y="1281">y</text>
                    <text class="axis-label" x="168" y="1312">x</text>
                </svg>
                <div class="view-tag"><b>Top</b><span class="tag-drop"></span></div>
            </div>
            <div class="doctabs">
                <span class="doctab grey">tutorial</span>
                <span class="doctab">Top</span>
                <span class="doctab plus">✚</span>
            </div>
        </div>

        <aside class="panel">
            <div class="panel-grip"></div>
            <div class="panel-tabs">
                <i class="ptab"><svg><use href="#i-wheel"/></svg></i>
                <i class="ptab"><svg><use href="#i-shield"/></svg></i>
                <i class="ptab"><svg><use href="#i-blueball"/></svg></i>
                <i class="ptab"><svg><use href="#i-paint"/></svg></i>
                <i class="ptab"><svg><use href="#i-open"/></svg></i>
                <i class="ptab"><svg><use href="#i-helpwin"/></svg></i>
                <i class="ptab"><svg><use href="#i-camera"/></svg></i>
                <svg class="panel-gear"><use href="#i-cog"/></svg>
            </div>
            <div class="panel-body">
                <div class="mode-buttons">
                    <i class="mode on"><svg><use href="#i-camera"/></svg></i>
                    <i class="mode"><span class="mode-frame"></span></i>
                </div>
                <div class="props">
                    <div class="prop-head">Viewport</div>
                    <div class="prop"><span>Title</span><span>Top</span></div>
                    <div class="prop dim"><span>Width</span><span>2260</span></div>
                    <div class="prop dim"><span>Height</span><span>1190</span></div>
                    <div class="prop"><span>Projection</span><span class="select">Parallel<i class="select-arrow"></i></span></div>

                    <div class="prop-head">Camera</div>
                    <div class="prop dim"><span>Lens Length</span><span>50.0</span></div>
                    <div class="prop"><span>Rotation</span><span>0.0</span></div>
                    <div class="prop"><span>X Location</span><span>14.877</span></div>
                    <div class="prop"><span>Y Location</span><span>195.279</span></div>
                    <div class="prop"><span>Z Location</span><span>1100.022</span></div>
                    <div class="prop shaded"><span>Distance t...</span><span>1100.022</span></div>
                    <div class="prop"><span>Location</span><span><button class="place">Place...</button></span></div>

                    <div class="prop-head">Target</div>
                    <div class="prop"><span>X Target</span><span>14.877</span></div>
                    <div class="prop"><span>Y Target</span><span>195.279</span></div>
                    <div class="prop"><span>Z Target</span><span>0.0</span></div>
                    <div class="prop"><span>Location</span><span><button class="place">Place...</button></span></div>

                    <div class="prop-head">Wallpaper</div>
                    <div class="prop"><span>Filename</span><span class="select">(none)<button class="dots">...</button></span></div>
                    <div class="prop"><span>Show</span><span><i class="box on"></i></span></div>
                    <div class="prop"><span>Gray</span><span><i class="box on"></i></span></div>
                </div>
            </div>
        </aside>
    </main>

    <div class="snapbar">
        <label><i class="box on"></i>End</label>
        <label><i class="box"></i>Near</label>
        <label><i class="box on"></i>Point</label>
        <label><i class="box on"></i>Mid</label>
        <label><i class="box"></i>Cen</label>
        <label><i class="box on"></i>Int</label>
        <label><i class="box"></i>Perp</label>
        <label><i class="box"></i>Tan</label>
        <label><i class="box"></i>Quad</label>
        <label><i class="box"></i>Knot</label>
        <label><i class="box"></i>Vertex</label>
        <label><i class="round"></i>Project</label>
        <label><i class="round"></i>Disable</label>
    </div>

    <div class="statusbar">
        <span></span><span></span><span></span><span></span><span></span>
        <span><i class="status-mark"></i></span>
        <span></span><span></span><span class="lit"></span><span></span><span class="lit"></span><span></span><span></span><span></span><span></span><span></span>
    </div>

    <div class="activate">
        <div class="activate-big">Activate Windows</div>
        <div>Go to Settings to activate Windows.</div>
    </div>

    <script src="diagrams.js"></script>
</body>
</html>
```

FILE: styles.css
```css
/* --- RHINO WINDOW --- */
body {
    margin: 0;
    width: 2559px;
    height: 1401px;
    overflow: hidden;
    display: flex;
    flex-direction: column;
    position: relative;
    background-color: #eaebef;
    color: #111;
    font-family: "Open Sans", "Noto Sans", sans-serif;
    font-size: 11.5px;
}

.icon-defs {
    position: absolute;
}

/* --- TITLE + MENU --- */
.titlebar {
    height: 23px;
    flex: none;
    display: flex;
    align-items: center;
    background-color: #f1f1f1;
    padding-left: 2px;
}

.title-logo {
    width: 17px;
    height: 17px;
    margin-right: 5px;
}

.title-text {
    letter-spacing: -0.06px;
}

.win-buttons {
    margin-left: auto;
    display: grid;
    grid-template-columns: 46px 46px 46px;
    justify-items: center;
    align-items: center;
    margin-right: 1px;
}

.win-min {
    width: 10px;
    border-top: 1px solid #111;
}

.win-max {
    width: 8px;
    height: 8px;
    border: 1px solid #111;
    border-radius: 1px;
    box-shadow: 2px -2px 0 -1px #f1f1f1, 2px -2px 0 0 #111;
}

.win-close {
    font-size: 13px;
    line-height: 1;
}

.menubar {
    height: 18px;
    flex: none;
    display: grid;
    grid-template-columns: 31px 34px 39px 45px 53px 40px 43px 71px 67px 41px 55px 51px 48px 87px 40px;
    align-items: center;
    padding-left: 8px;
    background-color: #fff;
    letter-spacing: -0.08px;
    white-space: nowrap;
}

/* --- COMMAND AREA --- */
.command {
    flex: none;
    margin-top: 5px;
    background-color: #fff;
    border-bottom: 1px solid #dde0e6;
    height: 47px;
    box-sizing: border-box;
    padding-left: 8px;
    position: relative;
}

.command::before {
    content: "";
    position: absolute;
    left: 0;
    top: 0;
    bottom: 0;
    width: 4px;
    border-right: 1px solid #d8dbe2;
    background-color: #fff;
}

.cmd-history {
    height: 30px;
    margin-top: -2px;
    line-height: 15px;
    position: relative;
    margin-right: 16px;
}

.cmd-line {
    height: 18px;
    box-sizing: border-box;
    margin-left: -8px;
    padding: 0 0 1px 8px;
    border-top: 1px solid #bfc6d4;
    display: flex;
    align-items: center;
    position: relative;
}

.caret {
    width: 1px;
    height: 14px;
    margin-left: 3px;
    background-color: #111;
}

.cmd-spin {
    position: absolute;
    right: 0;
    top: 0;
    width: 16px;
    height: 18px;
    display: flex;
    flex-direction: column;
    align-items: center;
    gap: 2px;
    background-color: #f0f0f0;
}

.cmd-spin i {
    width: 13px;
    height: 7px;
    background-color: #eceef2;
    border: 1px solid #bbb;
    box-sizing: border-box;
}

.spin-up {
    background-image: linear-gradient(45deg, transparent 50%, #111 50%), linear-gradient(-45deg, transparent 50%, #111 50%);
    background-size: 4px 4px;
    background-position: 2px 1px, 6px 1px;
    background-repeat: no-repeat;
}

.spin-down {
    background-image: linear-gradient(135deg, #111 50%, transparent 50%), linear-gradient(-135deg, #111 50%, transparent 50%);
    background-size: 4px 4px;
    background-position: 2px 1px, 6px 1px;
    background-repeat: no-repeat;
}

/* --- RIBBON TABS --- */
.tabstrip {
    height: 22px;
    flex: none;
    box-sizing: border-box;
    display: grid;
    grid-template-columns: 67px 63px 64px 59px 53px 106px 65px 75px 81px 90px 77px 80px 89px 64px 64px;
    align-items: end;
    padding: 3px 0 0 8px;
    background-color: #eeeef1;
    border-top: 1px solid #c9cdd8;
    border-bottom: 1px solid #bfc6d4;
    margin-top: 3px;
    position: relative;
}

.tab {
    height: 17px;
    line-height: 17px;
    margin-left: -4px;
    padding-left: 15px;
    background-color: #d9dade;
    border-top: 1px solid #c3c8d6;
    border-radius: 3px 3px 0 0;
    clip-path: polygon(9px 0, 100% 0, 100% 100%, 0 100%);
    white-space: nowrap;
    box-sizing: border-box;
}

.tab.active {
    background-color: #eaebef;
    margin-bottom: -1px;
    margin-left: 0;
    padding-left: 9px;
    height: 18px;
    clip-path: none;
    border-left: 1px solid #c3c8d6;
    border-right: 1px solid #c3c8d6;
    z-index: 1;
}

.strip-gear {
    position: absolute;
    right: 0;
    top: 3px;
    width: 15px;
    height: 15px;
}

/* --- TOP TOOLBAR --- */
.toolbar {
    height: 39px;
    flex: none;
    box-sizing: border-box;
    display: flex;
    align-items: center;
    gap: 4px;
    padding: 0 0 8px 8px;
    background-color: #eaebef;
    border-bottom: 1px solid #bfc6d4;
}

.tb {
    width: 24px;
    height: 24px;
    display: block;
    position: relative;
    flex: none;
}

.tb svg {
    width: 24px;
    height: 24px;
    display: block;
}

.fly::after {
    content: "";
    position: absolute;
    right: -4px;
    bottom: -3px;
    width: 6px;
    height: 6px;
    background-color: #6a6a6a;
    clip-path: polygon(100% 0, 100% 100%, 0 100%);
}

/* --- MAIN AREA --- */
.workarea {
    height: 1212px;
    flex: none;
    display: flex;
}

.lefttools {
    width: 98px;
    flex: none;
    display: flex;
}

.tool-main {
    width: 60px;
    border-right: 1px solid #d5d8e0;
    box-sizing: content-box;
    margin-bottom: 3px;
}

.grip {
    height: 1px;
    margin: 3px 2px 0;
    border-top: 1px solid #cdd2dc;
    border-bottom: 1px solid #dfe2e8;
}

.tool-grid {
    display: grid;
    grid-template-columns: 28px 28px;
    grid-auto-rows: 28px;
    padding-top: 1px;
    justify-items: center;
    align-items: center;
    width: 56px;
}

.tool-grid .tb svg {
    width: 22px;
    height: 22px;
    margin: 1px;
}

.tool-rv {
    width: 34px;
    padding: 0 3px;
    box-sizing: border-box;
    text-align: center;
}

.tool-rv .grip {
    margin: 3px 0 0;
}

.rv {
    display: block;
    height: 27px;
    padding-top: 1px;
    box-sizing: border-box;
}

.rv svg {
    width: 24px;
    height: 24px;
    display: block;
    margin: 0 auto;
}

.tool-rv hr {
    height: 1px;
    border: none;
    background-color: #bcbcc0;
    margin: 3px 3px 5px;
}

.net-grey { color: #6a6e74; }
.net-green { color: #3ec04a; }

.center {
    width: 2261px;
    flex: none;
}

/* --- VIEWPORT --- */
.viewport {
    height: 1190px;
    position: relative;
    background-color: #9ea2aa;
    border-bottom: 1px solid #b3b9c6;
    box-sizing: border-box;
    overflow: hidden;
}

.canvas {
    position: absolute;
    left: 0;
    top: 0;
    width: 2260px;
    height: 1190px;
    font-family: "Open Sans", sans-serif;
}

.page-frame {
    fill: none;
    stroke: #666;
    stroke-width: 1;
}

.page-title {
    font-family: "Liberation Sans", sans-serif;
    font-size: 49.500px;
    fill: #666;
}

.axes {
    fill: none;
    stroke: #666;
}

.axis-label {
    font-size: 13px;
    fill: #666;
}

.view-tag {
    position: absolute;
    left: 0;
    top: 0;
    width: 47px;
    height: 18px;
    background-color: #7f9ebf;
    display: flex;
    align-items: center;
    padding-left: 7px;
    box-sizing: border-box;
    font-size: 12px;
}

.tag-drop {
    margin-left: 7px;
    height: 14px;
    width: 10px;
    border-left: 1px solid #111;
    position: relative;
}

.tag-drop::after {
    content: "";
    position: absolute;
    left: 2px;
    top: 5px;
    border-left: 4px solid transparent;
    border-right: 4px solid transparent;
    border-top: 4px solid #111;
}

.doctabs {
    height: 21px;
    display: grid;
    grid-template-columns: 53px 33px 27px;
}

.doctab {
    height: 20px;
    line-height: 23px;
    padding-left: 10px;
    box-sizing: border-box;
    background-color: #f1f2f5;
    border: 1px solid #c3c8d6;
    border-top: none;
    border-left: none;
    border-radius: 0 0 3px 3px;
    clip-path: polygon(0 0, 100% 0, 100% 100%, 6px 100%);
    font-size: 12px;
}

.doctab.grey {
    background-color: #d6d7da;
}

.doctab.plus {
    background-color: #eaebef;
    color: #777;
    font-size: 10px;
    padding-left: 11px;
}

/* --- RIGHT PANEL --- */
.panel {
    width: 200px;
    flex: none;
    padding-left: 8px;
    box-sizing: border-box;
    position: relative;
}

.panel-grip {
    height: 1px;
    margin-top: 3px;
    border-top: 1px solid #cdd2dc;
    border-bottom: 1px solid #dfe2e8;
}

.panel-tabs {
    height: 21px;
    margin-top: 1px;
    display: flex;
    box-sizing: border-box;
    border-bottom: 1px solid #bfc6d4;
    position: relative;
}

.ptab {
    width: 18px;
    height: 20px;
    display: flex;
    align-items: center;
    justify-content: center;
    background-color: #d9dade;
    border-radius: 4px 4px 0 0;
    border-top: 1px solid #c8ccd6;
    box-sizing: border-box;
}

.ptab:first-child {
    background-color: #f6f6f9;
}

.ptab svg {
    width: 17px;
    height: 17px;
}

.panel-gear {
    position: absolute;
    right: 2px;
    top: 1px;
    width: 15px;
    height: 15px;
    color: #c9c9c9;
}

.panel-body {
    height: 1180px;
    box-sizing: border-box;
    background-color: #f6f6f9;
    border-left: 1px solid #bfc6d4;
    border-bottom: 1px solid #bfc6d4;
    padding: 3px 0 0 4px;
}

.mode-buttons {
    display: flex;
    gap: 4px;
    height: 28px;
    margin-bottom: 4px;
}

.mode {
    width: 26px;
    height: 26px;
    box-sizing: border-box;
    display: flex;
    align-items: center;
    justify-content: center;
    border: 1px solid #c5c5c5;
    border-radius: 4px;
    background-color: #e4e4e4;
}

.mode.on {
    background-color: #a9cfe8;
    border-color: #2c6ea0;
}

.mode svg {
    width: 20px;
    height: 20px;
}

.mode-frame {
    width: 14px;
    height: 12px;
    background-color: #fff;
    border: 1px solid #d42020;
    outline: 2px solid #6aa8d0;
    box-shadow: 0 0 0 3px #666;
}

.props {
    width: 180px;
    border: 1px solid #e9eaee;
    border-bottom: none;
    box-sizing: border-box;
    background-color: #f0f1f4;
}

.prop-head {
    height: 26px;
    line-height: 26px;
    padding-left: 3px;
    font-size: 12.500px;
    background-color: #f6f6f9;
    box-sizing: border-box;
    border-bottom: 1px solid #e9eaee;
}

.prop {
    display: grid;
    grid-template-columns: 72px 90px;
    height: 21px;
    box-sizing: border-box;
    padding-left: 17px;
    border-bottom: 1px solid #eaebef;
    line-height: 20px;
}

.prop > span {
    background-color: #fff;
    white-space: nowrap;
    overflow: hidden;
}

.prop > span:first-child {
    padding-left: 4px;
    border-right: 1px solid #eaebef;
}

.prop > span:last-child {
    padding-left: 5px;
    position: relative;
}

.prop.dim {
    color: #8a8c90;
}

.prop.dim > span:last-child,
.prop.shaded > span:last-child {
    background-color: #eaebef;
}

.prop .dots {
    position: absolute;
    right: 1px;
    top: 1px;
    width: 18px;
    height: 17px;
    padding: 0;
    font: inherit;
    line-height: 12px;
    background-color: #fff;
    border: 1px solid #bbb;
    border-radius: 3px;
}

.select-arrow {
    position: absolute;
    right: 0;
    top: 0;
    width: 20px;
    height: 20px;
    box-sizing: border-box;
    border-left: 1px solid #ccc;
    background-color: #fff;
}

.select-arrow::after {
    content: "";
    position: absolute;
    left: 7px;
    top: 5px;
    width: 4px;
    height: 4px;
    border-right: 1px solid #666;
    border-bottom: 1px solid #666;
    transform: rotate(45deg);
}

.prop .place {
    display: block;
    position: absolute;
    left: 1px;
    top: 1px;
    width: 87px;
    height: 18px;
    padding: 0;
    font: inherit;
    background-color: #fff;
    border: 1px solid #bbb;
    border-radius: 3px;
}

/* --- CHECKBOXES --- */
.box {
    display: inline-block;
    width: 13px;
    height: 13px;
    box-sizing: border-box;
    border: 1px solid #666;
    border-radius: 3px;
    position: relative;
    background-color: #f6f6f9;
    vertical-align: middle;
}

.box.on {
    background-color: #1268b8;
    border-color: #1268b8;
}

.box.on::after {
    content: "";
    position: absolute;
    left: 3px;
    top: 2px;
    width: 5px;
    height: 3px;
    border-left: 1px solid #fff;
    border-bottom: 1px solid #fff;
    transform: rotate(-45deg);
}

.round {
    display: inline-block;
    width: 11px;
    height: 11px;
    box-sizing: border-box;
    border: 1px solid #d8d8d8;
    border-radius: 50%;
    background-color: #fff;
}

/* --- SNAP + STATUS --- */
.snapbar {
    height: 27px;
    flex: none;
    box-sizing: border-box;
    display: grid;
    grid-template-columns: 43px 48px 51px 45px 43px 37px 47px 42px 52px 48px 57px 68px 60px;
    align-items: center;
    padding: 6px 0 0 9px;
    border-bottom: 1px solid #bfc6d4;
    margin-top: -1px;
}

.snapbar label {
    display: flex;
    align-items: center;
    gap: 3px;
    white-space: nowrap;
}

.statusbar {
    flex: 1;
    display: grid;
    grid-template-columns: 50px 88px 88px 88px 88px 169px 64px 45px 47px 49px 73px 58px 92px 40px 1514px 7px;
    overflow: hidden;
}

.statusbar span {
    border-right: 1px solid #c3c8d6;
}

.statusbar .lit {
    background-color: #e4f2fb;
}

.status-mark {
    display: block;
    width: 14px;
    height: 3px;
    margin: 2px 0 0 4px;
    background-color: #000;
}

/* --- WATERMARK --- */
.activate {
    position: absolute;
    left: 2208px;
    top: 1298px;
    font-size: 14.500px;
    color: rgba(160, 160, 165, 0.55);
    white-space: nowrap;
}

.activate-big {
    font-size: 19.500px;
    line-height: 27px;
}
```

FILE: diagrams.js
```js
// form + force diagrams, drawn from the top left quarter and mirrored
var SVG_NS = "http://www.w3.org/2000/svg";
var canvas = document.getElementById("canvas");
var quarters = [[1,1],[-1,1],[1,-1],[-1,-1]];

function add(tag, attrs, parent) {
    var node = document.createElementNS(SVG_NS, tag);
    for (var key in attrs) node.setAttribute(key, attrs[key]);
    (parent || canvas).appendChild(node);
    return node;
}

var labelColors = {
    5: "#0a4fd6", 6: "#0e62e4", 7: "#1270ee", 8: "#1a84ee", 9: "#1e8cee",
    10: "#2497f0", 12: "#2aa2e2", 13: "#30b2ea", 15: "#32caf0", 17: "#34f0f0",
    18: "#3af0d8", 19: "#3af0d0", 23: "#3ae8a0", 25: "#3ae880", 30: "#3ee040",
    32: "#4ae03a", 58: "#f09020", 66: "#f03222", 68: "#f01a2a", 69: "#f00c22"
};

// text, x, y, optional text bottom left, optional text bottom right
var meshLabels = [
    ["69",105,66],["69",72,100],["68",215,102],["32",173,133],["32",140,167],["68",108,209],
    ["66",320,129],["58",425,146],["30",530,155],["23",275,160],["25",235,191],["15",379,179],
    ["7",479,190],["17",333,210],["10",432,224],["25",197,229],["19",290,246,"18","18"],["12",386,261],
    ["6",483,269],["23",165,270],["19",252,285,"18","19"],["13",344,296],["8",437,306],["66",134,314],
    ["17",217,327],["13",303,338],["9",393,347],["15",184,372],["12",265,381],["9",352,389],
    ["5",443,393],["58",152,419],["10",229,427],["8",312,432],["5",399,437],["7",197,474],
    ["6",275,478],["30",160,523]
];

var forceLabels = [
    ["32",104,72],["69",282,55],["68",333,69],["66",384,82],["58",435,89],["30",486,93],
    ["32",67,107],["23",207,98],["25",165,132],["15",308,118],["7",408,128],["17",263,152],
    ["10",361,165],["25",129,169],["19",221,186,"18","18"],["12",317,200],["6",413,207],["23",93,210],
    ["19",182,225,"18","19"],["13",274,239],["8",368,247],["69",50,286],["17",148,267],["13",235,278],
    ["9",323,288],["15",113,313],["12",195,322],["9",283,329],["5",373,335],["68",65,337],
    ["10",161,366],["8",242,373],["5",330,377],["66",77,387],["7",124,413],["6",204,419],
    ["58",84,438],["30",90,489]
];

var meshGrid = [
    [[50,46],[161,87],[267,119],[372,140],[477,153],[580,157]],
    [[93,155],[186,181],[284,203],[382,218],[482,228],[580,232]],
    [[123,262],[207,279],[297,292],[390,304],[485,310],[580,313]],
    [[146,368],[224,378],[309,385],[398,392],[489,397],[580,398]],
    [[160,471],[235,476],[316,481],[402,484],[491,485],[580,487]],
    [[163,574],[237,574],[319,574],[404,574],[491,574],[580,574]]
];

var forceGrid = [
    [[53,55],[155,87],[258,110],[359,125],[459,132]],
    [[83,158],[173,178],[268,194],[365,205],[462,211]],
    [[105,262],[190,272],[278,282],[371,290],[464,294]],
    [[120,362],[200,370],[286,376],[374,379],[465,381]],
    [[127,465],[206,467],[290,468],[377,470],[465,470]]
];

// zoom px to page px, for one of the four quarters
function place(d, p, sx, sy) {
    return {
        x: d.ox + (d.cx + sx * (p[0] - d.cx)) / 3,
        y: d.oy + (d.cy + sy * (p[1] - d.cy)) / 3
    };
}

function line(a, b, color, group) {
    add("line", { x1: a.x, y1: a.y, x2: b.x, y2: b.y, stroke: color, "stroke-width": 0.9 }, group);
}

function drawLabels(d, labels) {
    labels.forEach(function (item) {
        quarters.forEach(function (q) {
            var text = item[0];
            if (q[1] < 0 && q[0] > 0 && item[3]) text = item[3];
            if (q[1] < 0 && q[0] < 0 && item[4]) text = item[4];
            var p = place(d, [item[1], item[2]], q[0], q[1]);
            var w = text.length > 1 ? 18 : 12.5;
            add("rect", {
                x: p.x - w / 2, y: p.y - 5.5, width: w, height: 11, rx: 4,
                fill: labelColors[text], stroke: "#000", "stroke-width": 1.2
            });
            var num = Number(text);
            var light = num <= 10 || num >= 66;
            var t = add("text", {
                x: p.x, y: p.y + 3.6, "text-anchor": "middle", "font-size": 10,
                fill: light ? "#fff" : "#12302c"
            });
            t.textContent = text;
        });
    });
}

// lines on the middle row or column belong to two quarters, draw them once
function drawGridLines(d, grid, color, group, sharedAxis) {
    var n = grid.length, m = grid[0].length;
    quarters.forEach(function (q) {
        for (var r = 0; r < n; r++) {
            for (var c = 0; c < m; c++) {
                var a = place(d, grid[r][c], q[0], q[1]);
                if (c + 1 < m && !(sharedAxis && r == n - 1 && q[1] < 0)) {
                    line(a, place(d, grid[r][c + 1], q[0], q[1]), color, group);
                }
                if (r + 1 < n && !(sharedAxis && c == m - 1 && q[0] < 0)) {
                    line(a, place(d, grid[r + 1][c], q[0], q[1]), color, group);
                }
            }
        }
    });
}

function drawNodes(d, grid, fill, ring, cornerRing) {
    quarters.forEach(function (q) {
        grid.forEach(function (row, r) {
            row.forEach(function (pt, c) {
                var p = place(d, pt, q[0], q[1]);
                add("circle", {
                    cx: p.x, cy: p.y, r: 2.4, fill: fill,
                    stroke: (r == 0 && c == 0 && cornerRing) || ring, "stroke-width": 1.2
                });
            });
        });
    });
}

// --- form diagram (green mesh) ---
var mesh = { ox: 1040, oy: 570, cx: 580, cy: 575 };

quarters.forEach(function (q) {
    var outline = meshGrid[0].map(function (pt) { return place(mesh, pt, q[0], q[1]); });
    outline.push(place(mesh, [580, 575], q[0], q[1]));
    for (var r = meshGrid.length - 1; r > 0; r--) outline.push(place(mesh, meshGrid[r][0], q[0], q[1]));
    add("polygon", {
        points: outline.map(function (p) { return p.x + "," + p.y; }).join(" "),
        fill: "#78d97a", stroke: "#78d97a", "stroke-width": 0.6
    });
});

var meshLines = add("g", {});
drawGridLines(mesh, meshGrid, "#3aa451", meshLines, true);
drawNodes(mesh, meshGrid, "#fff", "#2fe050", "#f03030");
drawLabels(mesh, meshLabels);

// --- force diagram (blue) ---
var force = { ox: 1500, oy: 590, cx: 511, cy: 513 };
var blue = "#1c44ee";
var forceLines = add("g", {});
drawGridLines(force, forceGrid, blue, forceLines, false);

quarters.forEach(function (q) {
    var top = place(force, [511, 52], q[0], q[1]);
    var side = place(force, [48, 513], q[0], q[1]);
    forceGrid[0].forEach(function (pt) { line(top, place(force, pt, q[0], q[1]), blue, forceLines); });
    forceGrid.forEach(function (row) { line(side, place(force, row[0], q[0], q[1]), blue, forceLines); });
    // lines crossing the middle
    if (q[0] > 0) {
        forceGrid.forEach(function (row) {
            line(place(force, row[4], 1, q[1]), place(force, row[4], -1, q[1]), blue, forceLines);
        });
    }
    if (q[1] > 0) {
        forceGrid[4].forEach(function (pt) {
            line(place(force, pt, q[0], 1), place(force, pt, q[0], -1), blue, forceLines);
        });
    }
});

drawNodes(force, forceGrid, "#fff", "#1fe6f0");
[[511,52],[48,513]].forEach(function (pt) {
    [[1,1],[-1,-1]].forEach(function (q) {
        var p = place(force, pt, q[0], q[1]);
        add("circle", { cx: p.x, cy: p.y, r: 2.6, fill: "#fff", stroke: "#1fe6f0", "stroke-width": 1.2 });
    });
});
drawLabels(force, forceLabels);
```
